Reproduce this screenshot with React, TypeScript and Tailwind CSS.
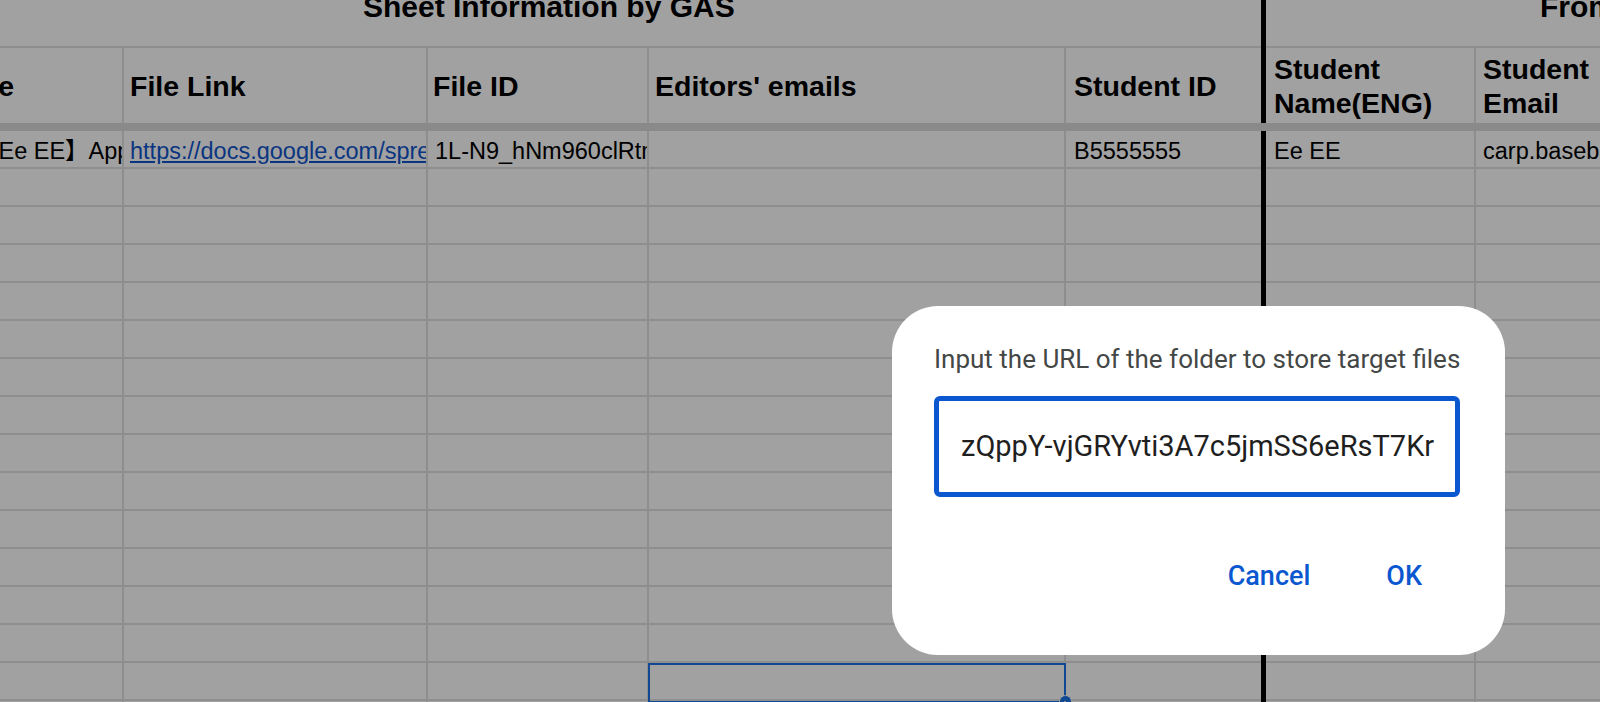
import React from "react";

const rows = Array.from({ length: 16 }, (_, i) => i);

export default function App() {
  return (
    <div className="relative w-[1600px] h-[702px] overflow-hidden bg-white text-black font-['Liberation_Sans','Noto_Sans_CJK_JP',sans-serif]">
      {/* Title row */}
      <div className="flex h-[48px]">
        <div className="w-[1261px] shrink-0 overflow-hidden border-b-2 border-[#e1e1e1] pl-[363px]">
          <div className="mt-[-10px] whitespace-nowrap text-[30px] leading-[34px] font-bold">
            Sheet Information by GAS
          </div>
        </div>
        <div className="w-[5px] shrink-0 bg-black" />
        <div className="w-[600px] shrink-0 overflow-hidden border-b-2 border-[#e1e1e1] pl-[274px]">
          <div className="mt-[-10px] whitespace-nowrap text-[30px] leading-[34px] font-bold">
            From Google Form
          </div>
        </div>
      </div>

      {/* Header row */}
      <div className="flex h-[75px] text-[28.5px] leading-[34px] font-bold">
        <div className="flex w-[124px] shrink-0 items-center justify-end overflow-hidden border-r-2 border-[#e1e1e1] pr-[108px]">
          <span className="whitespace-nowrap">File Name</span>
        </div>
        <div className="flex w-[304px] shrink-0 items-center overflow-hidden border-r-2 border-[#e1e1e1] pl-[6px] whitespace-nowrap">
          File Link
        </div>
        <div className="flex w-[221px] shrink-0 items-center overflow-hidden border-r-2 border-[#e1e1e1] pl-[5px] whitespace-nowrap">
          File ID
        </div>
        <div className="flex w-[417px] shrink-0 items-center overflow-hidden border-r-2 border-[#e1e1e1] pl-[6px] whitespace-nowrap">
          Editors' emails
        </div>
        <div className="flex w-[195px] shrink-0 items-center overflow-hidden pl-[8px] whitespace-nowrap">
          Student ID
        </div>
        <div className="w-[5px] shrink-0 bg-black" />
        <div className="flex w-[210px] shrink-0 flex-col justify-center overflow-hidden border-r-2 border-[#e1e1e1] pl-[8px] whitespace-nowrap">
          <span>Student</span>
          <span>Name(ENG)</span>
        </div>
        <div className="flex w-[224px] shrink-0 flex-col justify-center overflow-hidden pl-[7px] whitespace-nowrap">
          <span>Student</span>
          <span>Email</span>
        </div>
      </div>

      {/* Frozen divider */}
      <div className="h-[8px] bg-[#dbdbdb]" />

      {/* Data rows */}
      {rows.map((r) => (
        <div key={r} className="flex h-[38px] text-[23.5px] leading-[26px]">
          <div className="flex w-[124px] shrink-0 items-end overflow-hidden border-r-2 border-b-2 border-[#e1e1e1] pb-[3px]">
            {r === 0 && (
              <span className="ml-[-25px] whitespace-nowrap">【Ee EE】Application Form</span>
            )}
          </div>
          <div className="flex w-[304px] shrink-0 items-end overflow-hidden border-r-2 border-b-2 border-[#e1e1e1] pb-[3px] pl-[6px]">
            {r === 0 && (
              <span className="whitespace-nowrap text-[#1155cc] underline">
                https://docs.google.com/spreadsheets/d/1L-N9_hNm960clRt/edit
              </span>
            )}
          </div>
          <div className="flex w-[221px] shrink-0 items-end overflow-hidden border-r-2 border-b-2 border-[#e1e1e1] pb-[3px] pl-[7px]">
            {r === 0 && <span className="whitespace-nowrap">1L-N9_hNm960clRtmQx8</span>}
          </div>
          <div className="relative w-[417px] shrink-0 border-r-2 border-b-2 border-[#e1e1e1]">
            {r === 14 && (
              <>
                <div className="absolute left-[-1px] top-0 right-[-2px] bottom-[-4px] border-[2.5px] border-[#1a73e8]" />
                <div className="absolute right-[-7.5px] bottom-[-8.5px] h-[13px] w-[13px] rounded-full border border-white bg-[#1a73e8]" />
              </>
            )}
          </div>
          <div className="flex w-[195px] shrink-0 items-end overflow-hidden border-b-2 border-[#e1e1e1] pb-[3px] pl-[8px]">
            {r === 0 && <span className="whitespace-nowrap">B5555555</span>}
          </div>
          <div className="w-[5px] shrink-0 bg-black" />
          <div className="flex w-[210px] shrink-0 items-end overflow-hidden border-r-2 border-b-2 border-[#e1e1e1] pb-[3px] pl-[8px]">
            {r === 0 && <span className="whitespace-nowrap">Ee EE</span>}
          </div>
          <div className="flex w-[224px] shrink-0 items-end overflow-hidden border-b-2 border-[#e1e1e1] pb-[3px] pl-[7px]">
            {r === 0 && <span className="whitespace-nowrap">carp.baseball.lover@gmail.com</span>}
          </div>
        </div>
      ))}

      {/* Modal overlay */}
      <div className="absolute inset-0 bg-[rgba(0,0,0,0.369)]" />

      {/* Dialog */}
      <div className="absolute left-[892px] top-[306px] flex h-[349px] w-[613px] flex-col rounded-[46px] bg-white pl-[42px] pr-[45px] pt-[35px] font-['Roboto','Noto_Sans',sans-serif]">
        <div className="whitespace-nowrap text-[26px] leading-[36px] text-[#444746]">
          Input the URL of the folder to store target files
        </div>
        <div className="mt-[19px] flex h-[101px] items-center overflow-hidden rounded-[6px] border-[5px] border-[#0b57d0] pl-[22px] text-[29px] text-[#1f1f1f] whitespace-nowrap">
          zQppY-vjGRYvti3A7c5jmSS6eRsT7Kr
        </div>
        <div className="mt-[43px] flex h-[72px] items-center justify-end gap-[36px] pr-[18px] text-[27px] font-medium text-[#0b57d0]">
          <span className="px-[20px] leading-[72px]">Cancel</span>
          <span className="px-[20px] leading-[72px]">OK</span>
        </div>
      </div>
    </div>
  );
}
